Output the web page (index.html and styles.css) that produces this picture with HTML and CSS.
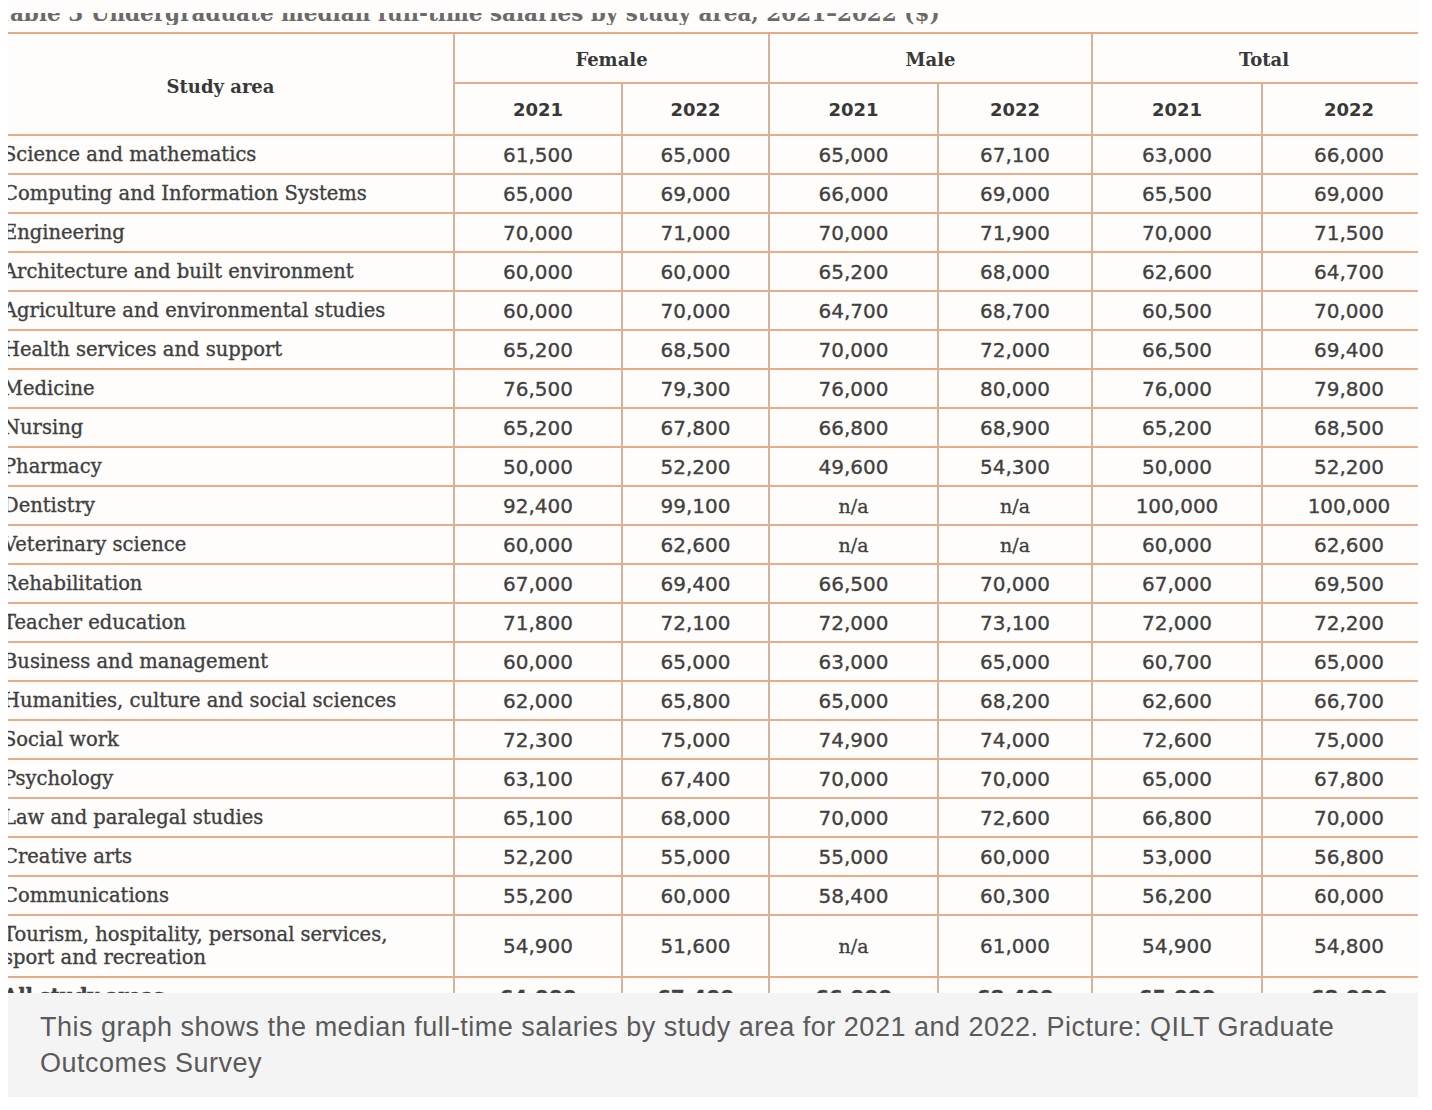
FILE: index.html
```html
<!DOCTYPE html>
<html lang="en">
<head>
    <meta charset="UTF-8">
    <title>Graduate salaries by study area</title>
    <link rel="stylesheet" href="styles.css">
</head>
<body>
    <div class="figure">
        <div class="picture">
            <div class="title-strip">
                <div class="title">Table 3 Undergraduate median full-time salaries by study area, 2021–2022 ($)</div>
            </div>

            <div class="sheet">
                <div class="cell head area">Study area</div>
                <div class="cell head group">Female</div>
                <div class="cell head group">Male</div>
                <div class="cell head group last">Total</div>
                <div class="cell year">2021</div>
                <div class="cell year">2022</div>
                <div class="cell year">2021</div>
                <div class="cell year">2022</div>
                <div class="cell year">2021</div>
                <div class="cell year last">2022</div>
            </div>
        </div>

        <div class="caption">This graph shows the median full-time salaries by study area for 2021 and 2022. Picture: QILT Graduate Outcomes Survey</div>
    </div>

    <script>
        var rows = [
            ["Science and mathematics", "61,500", "65,000", "65,000", "67,100", "63,000", "66,000"],
            ["Computing and Information Systems", "65,000", "69,000", "66,000", "69,000", "65,500", "69,000"],
            ["Engineering", "70,000", "71,000", "70,000", "71,900", "70,000", "71,500"],
            ["Architecture and built environment", "60,000", "60,000", "65,200", "68,000", "62,600", "64,700"],
            ["Agriculture and environmental studies", "60,000", "70,000", "64,700", "68,700", "60,500", "70,000"],
            ["Health services and support", "65,200", "68,500", "70,000", "72,000", "66,500", "69,400"],
            ["Medicine", "76,500", "79,300", "76,000", "80,000", "76,000", "79,800"],
            ["Nursing", "65,200", "67,800", "66,800", "68,900", "65,200", "68,500"],
            ["Pharmacy", "50,000", "52,200", "49,600", "54,300", "50,000", "52,200"],
            ["Dentistry", "92,400", "99,100", "n/a", "n/a", "100,000", "100,000"],
            ["Veterinary science", "60,000", "62,600", "n/a", "n/a", "60,000", "62,600"],
            ["Rehabilitation", "67,000", "69,400", "66,500", "70,000", "67,000", "69,500"],
            ["Teacher education", "71,800", "72,100", "72,000", "73,100", "72,000", "72,200"],
            ["Business and management", "60,000", "65,000", "63,000", "65,000", "60,700", "65,000"],
            ["Humanities, culture and social sciences", "62,000", "65,800", "65,000", "68,200", "62,600", "66,700"],
            ["Social work", "72,300", "75,000", "74,900", "74,000", "72,600", "75,000"],
            ["Psychology", "63,100", "67,400", "70,000", "70,000", "65,000", "67,800"],
            ["Law and paralegal studies", "65,100", "68,000", "70,000", "72,600", "66,800", "70,000"],
            ["Creative arts", "52,200", "55,000", "55,000", "60,000", "53,000", "56,800"],
            ["Communications", "55,200", "60,000", "58,400", "60,300", "56,200", "60,000"],
            ["Tourism, hospitality, personal services,<br>sport and recreation", "54,900", "51,600", "n/a", "61,000", "54,900", "54,800"],
            ["All study areas", "64,000", "67,400", "66,000", "68,400", "65,000", "68,000"]
        ];

        var sheet = document.querySelector(".sheet");

        for (var i = 0; i < rows.length; i++) {
            for (var j = 0; j < rows[i].length; j++) {
                var cell = document.createElement("div");
                var value = rows[i][j];

                if (j == 0) {
                    cell.className = "cell area-name";
                    cell.innerHTML = value;
                } else {
                    cell.className = value == "n/a" ? "cell num na" : "cell num";
                    cell.textContent = value;
                }

                if (j == rows[i].length - 1) {
                    cell.className += " last";
                }
                if (i == rows.length - 1) {
                    cell.className += " total";
                }

                sheet.appendChild(cell);
            }
        }
    </script>
</body>
</html>
```

FILE: styles.css
```css
body {
    margin: 0;
    background-color: #ffffff;
}

.figure {
    width: 1410px;
    margin-left: 8px;
}

.picture {
    height: 993px;
    overflow: hidden;
    background-color: #fffdfb;
}

.title-strip {
    height: 12px;
    margin-top: 13px;
    margin-bottom: 7px;
    overflow: hidden;
}

.title {
    margin-top: -11px;
    margin-left: -12px;
    font-family: "DejaVu Serif", serif;
    font-weight: bold;
    font-size: 21.5px;
    line-height: 24px;
    color: #6a6a6a;
    white-space: nowrap;
}

.sheet {
    display: grid;
    grid-template-columns: 455px 168px 147px 169px 154px 170px 172px;
    grid-template-rows: 50px 52px repeat(20, 39px) 62px 39px;
    margin-left: -8px;
    border-top: 2px solid #e6aa86;
}

.cell {
    display: flex;
    align-items: center;
    justify-content: center;
    box-sizing: border-box;
    border-right: 2px solid #d6b29a;
    border-bottom: 2px solid #e8ac88;
    color: #404040;
}

.cell.last {
    border-right: none;
}

.head {
    padding-top: 3px;
    font-family: "DejaVu Serif", serif;
    font-weight: bold;
    font-size: 18px;
    color: #383838;
}

.area {
    grid-row: span 2;
    padding-top: 5px;
    padding-right: 12px;
}

.group {
    grid-column: span 2;
}

.year {
    font-family: "DejaVu Sans", sans-serif;
    font-weight: bold;
    font-size: 18px;
    color: #383838;
}

.area-name {
    justify-content: flex-start;
    padding-left: 3px;
    font-family: "DejaVu Serif", serif;
    font-size: 19.5px;
    line-height: 23px;
    -webkit-text-stroke: 0.35px #404040;
}

.num {
    font-family: "DejaVu Sans", sans-serif;
    font-size: 20px;
    -webkit-text-stroke: 0.3px #404040;
}

.na {
    font-family: "DejaVu Serif", serif;
    font-size: 19px;
}

.total {
    font-weight: bold;
}

.caption {
    box-sizing: border-box;
    height: 104px;
    padding: 16px 32px;
    background-color: #f4f4f4;
    font-family: "Liberation Sans", Arial, sans-serif;
    font-size: 27px;
    letter-spacing: 0.5px;
    line-height: 36px;
    color: #5a5a5a;
}
```
